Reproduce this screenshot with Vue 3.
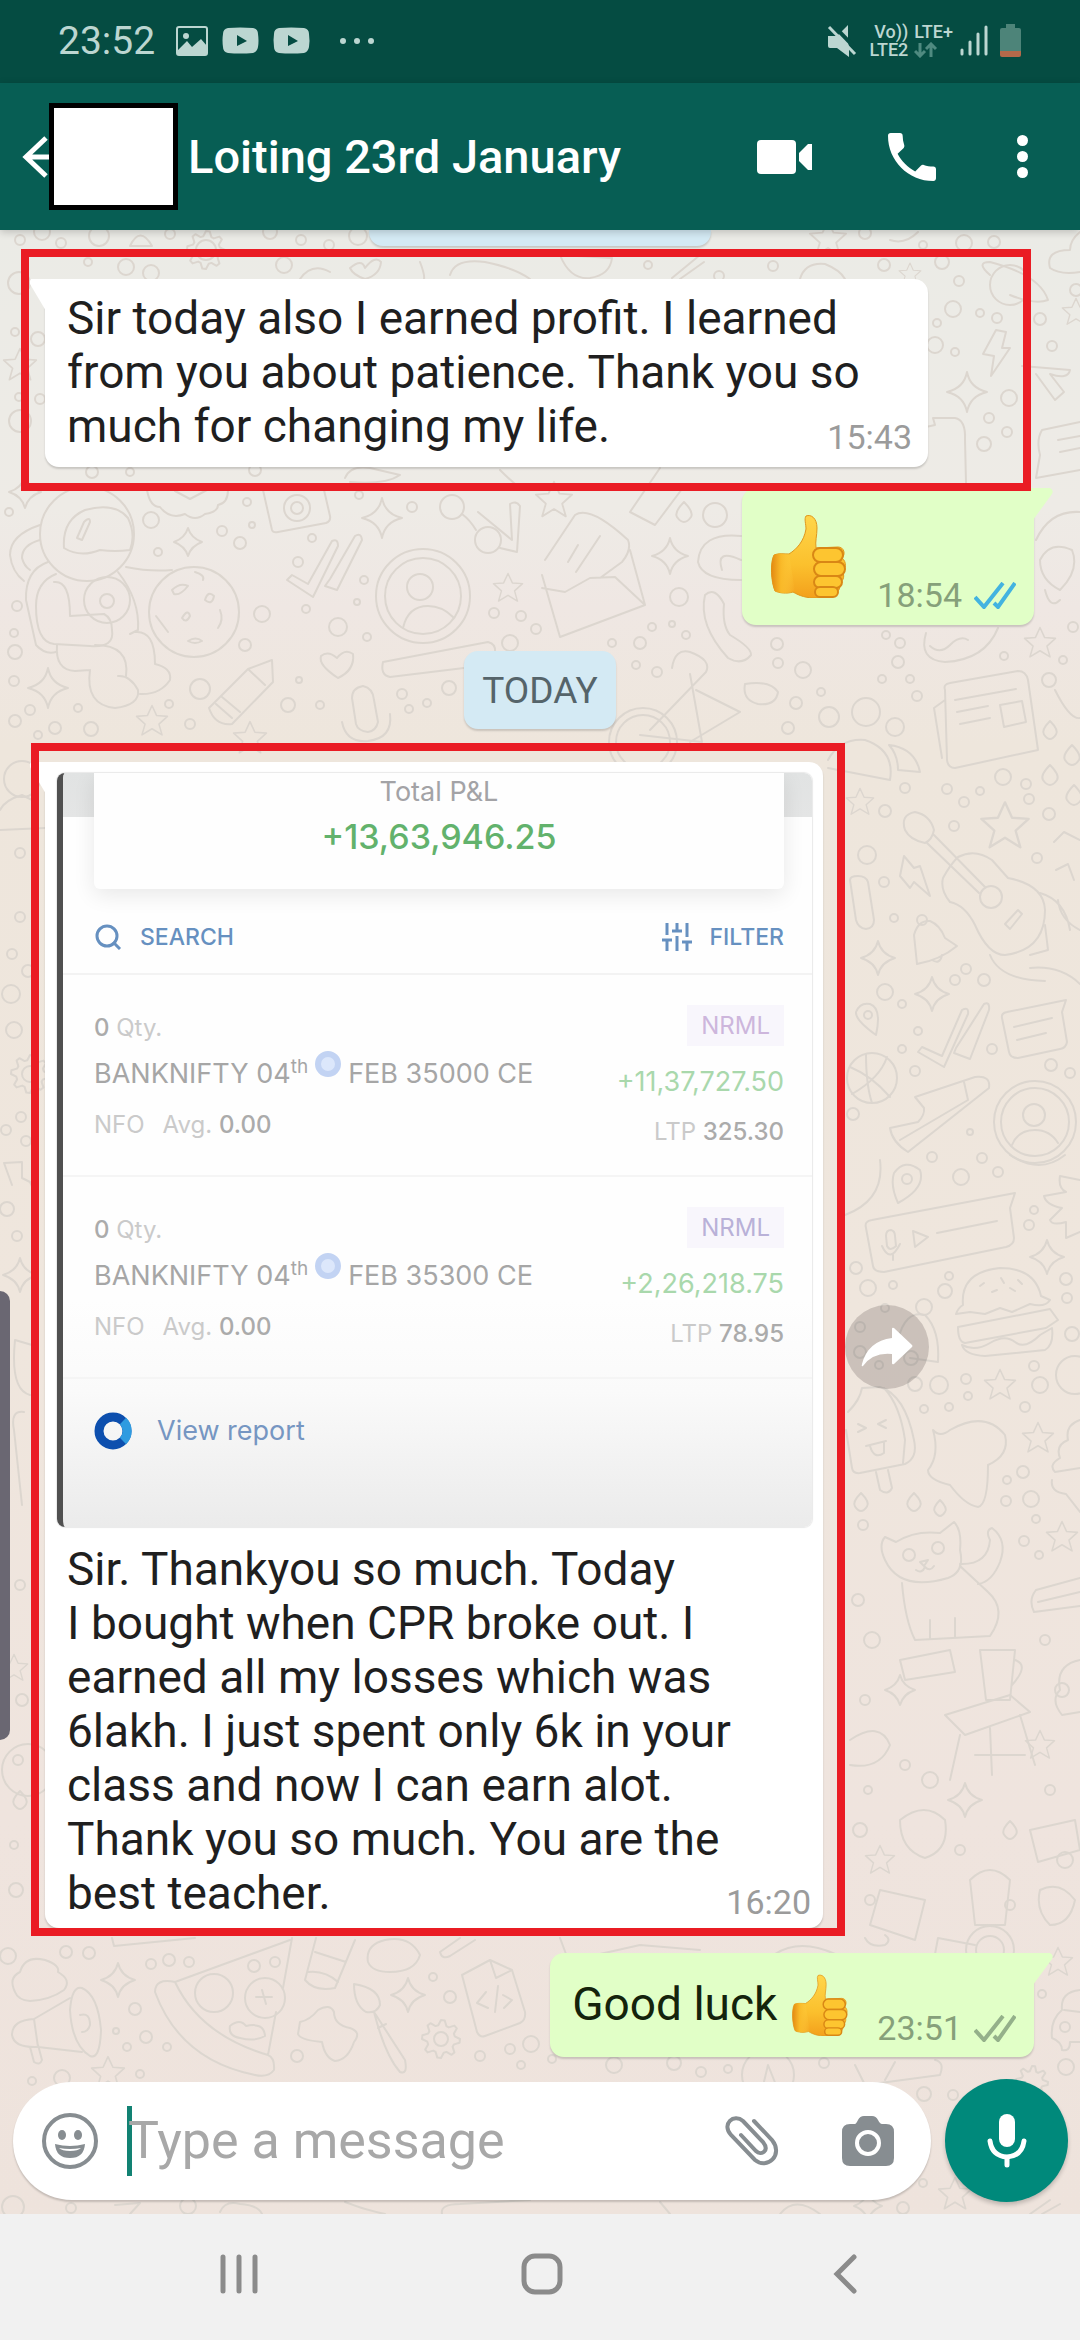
<template>
  <div class="screen">
    <svg class="defs" width="0" height="0" aria-hidden="true">
      <defs>
        <linearGradient id="skin" x1="0" y1="0" x2="0" y2="1">
          <stop offset="0" stop-color="#ffd64b" />
          <stop offset="0.6" stop-color="#fbc02d" />
          <stop offset="1" stop-color="#f3a01c" />
        </linearGradient>
        <linearGradient id="wrist" x1="0" y1="0" x2="1" y2="0">
          <stop offset="0" stop-color="#e38a12" />
          <stop offset="0.4" stop-color="#f9b928" />
          <stop offset="1" stop-color="#ffd145" stop-opacity="0" />
        </linearGradient>
        <symbol id="thumb" viewBox="0 0 76 84">
          <path d="M36 2c5-2 11 2 11 12 0 8-2 13-1 20l22-1c6 0 8 7 4 11 5 4 4 11 0 13 3 4 2 10-3 12 2 4 0 9-4 10 0 4-3 5-7 5H46c-10 0-16-2-23-6-6 2-14 1-18-1C1 68 0 48 4 41c4-2 10-1 15-1 8-5 15-13 17-25 0-5-2-10 0-13z" fill="url(#skin)" stroke="#e0971c" stroke-width="1" />
          <path d="M4 41c4-2 10-1 15-1l6 37-2 1c-6 2-14 1-18-1C1 68 0 48 4 41z" fill="url(#wrist)" />
          <g fill="#fdc530" stroke="#d98715" stroke-width="2">
            <rect x="43" y="34" width="30" height="14" rx="7" />
            <rect x="44" y="48" width="31" height="14" rx="7" />
            <rect x="44" y="62" width="28" height="12" rx="6" />
            <rect x="45" y="73" width="23" height="10" rx="5" />
          </g>
        </symbol>
        <symbol id="ticks" viewBox="0 0 42 27">
          <path d="M1 15l9 10L29 1M20 21l4 4L41 1" fill="none" stroke="currentColor" stroke-width="4" />
        </symbol>
        <symbol id="star" viewBox="-22 -22 44 44" overflow="visible">
          <path d="M0-20 6-7 20-6 9 4 13 18 0 10-13 18-9 4-20-6-6-7Z" />
        </symbol>
      </defs>
    </svg>

    <div class="status">
      <span class="clock">23:52</span>
      <svg width="32" height="30" viewBox="0 0 32 30">
        <rect x="1" y="1" width="30" height="28" rx="2" fill="none" stroke="currentColor" stroke-width="2" />
        <circle cx="10" cy="10" r="3" fill="currentColor" />
        <path d="M2 28v-4l9-9 5 6 9-8 6 7v8z" fill="currentColor" />
      </svg>
      <svg v-for="n in 2" :key="n" width="37" height="27" viewBox="0 0 37 27">
        <path fill-rule="evenodd" d="M6 1q12-1 25 0 5 1 5 6 1 7 0 13-1 5-5 6-13 1-25 0-5-1-5-6-1-7 0-13 0-5 5-6zM15 8v11l10-5z" fill="currentColor" />
      </svg>
      <svg class="more" width="36" height="8" viewBox="0 0 36 8" fill="currentColor">
        <circle cx="4" cy="4" r="3" /><circle cx="18" cy="4" r="3" /><circle cx="32" cy="4" r="3" />
      </svg>
      <div class="status-right">
        <svg width="30" height="32" viewBox="0 0 30 32" fill="currentColor">
          <path d="M1 11h9l11-11v15l1 9v8l-12-9H3q-2 0-2-2z" />
          <path d="M4 -2l28 29" stroke="#054c42" stroke-width="4" />
          <path d="M2 2l26 27" stroke="currentColor" stroke-width="3" />
        </svg>
        <div class="lte">
          <span>Vo))</span><span>LTE+</span>
          <span>LTE2</span>
          <svg width="24" height="16" viewBox="0 0 24 16" fill="none" stroke="#4f8a80" stroke-width="3">
            <path d="M6 1v12M1 9l5 5 5-5M17 15V3M12 7l5-5 5 5" />
          </svg>
        </div>
        <svg width="28" height="31" viewBox="0 0 28 31" stroke="currentColor" stroke-width="3" stroke-linecap="round">
          <path d="M2 25v4M10 17v12M18 9v20M26 2v27" />
        </svg>
        <svg width="21" height="33" viewBox="0 0 21 33">
          <path d="M6 0h9v4h4q2 0 2 2v21H0V6q0-2 2-2h4z" fill="#4d8479" />
          <path d="M0 27h21v4q0 2-2 2H2q-2 0-2-2z" fill="#b4694a" />
        </svg>
      </div>
    </div>

    <header class="bar">
      <button class="back" aria-label="Back">
        <svg width="27" height="42" viewBox="0 0 27 42" fill="none" stroke="#fff" stroke-width="5">
          <path d="M24 2L4 21l20 19M4 21h24" />
        </svg>
      </button>
      <div class="avatar"></div>
      <h1>Loiting 23rd January</h1>
      <button aria-label="Video call">
        <svg width="55" height="34" viewBox="0 0 55 34" fill="#fff">
          <rect width="39" height="34" rx="4" /><path d="M42 13l9-9h4v26h-4l-9-9z" />
        </svg>
      </button>
      <button class="call" aria-label="Voice call">
        <svg width="48" height="48" viewBox="3 3 18 18" fill="#fff">
          <path d="M6.600 10.800c1.400 2.800 3.800 5.100 6.600 6.600l2.200-2.200c.3-.3.700-.4 1-.2 1.100.4 2.300.6 3.600.6.600 0 1 .4 1 1V20c0 .6-.4 1-1 1C10.600 21 3 13.400 3 4c0-.6.400-1 1-1h3.500c.6 0 1 .4 1 1 0 1.200.2 2.400.6 3.600.1.300 0 .7-.2 1z" />
        </svg>
      </button>
      <button class="menu" aria-label="More options">
        <svg width="11" height="43" viewBox="0 0 11 43" fill="#fff">
          <circle cx="5.500" cy="5.500" r="5.500" /><circle cx="5.500" cy="21.500" r="5.500" /><circle cx="5.500" cy="37.500" r="5.500" />
        </svg>
      </button>
    </header>

    <main class="chat">
      <svg class="wallpaper" viewBox="0 230 1080 1984" preserveAspectRatio="xMidYMin slice" aria-hidden="true">
        <circle v-for="([x, y, r], i) in dots" :key="'d' + i" :cx="x" :cy="y" :r="r" />
        <use v-for="([x, y, r], i) in stars" :key="'s' + i" href="#star" :x="x - r" :y="y - r" :width="r * 2" :height="r * 2" />
        <path v-for="(s, i) in sparkles" :key="'k' + i" :d="sparkle(...s)" />
        <path v-for="(s, i) in drops" :key="'w' + i" :d="drop(...s)" />
        <path v-for="(s, i) in gears" :key="'g' + i" :d="gear(...s)" />
        <path v-for="(d, i) in doodles" :key="'p' + i" :d="d" />
      </svg>
      <div class="edge"></div>

      <div class="date-chip cut"></div>

      <section class="frame first">
        <div class="bubble in note">
          <svg class="tail" width="17" height="32" viewBox="0 0 17 32"><path d="M17 0H2Q0 2 1 5l16 27z" fill="#fff" /></svg>
          <p>Sir today also I earned profit. I learned<br>from you about patience. Thank you so<br>much for changing my life.</p>
          <time>15:43</time>
        </div>
      </section>

      <div class="bubble out big">
        <svg class="tail" width="20" height="32" viewBox="0 0 20 32"><path d="M0 0h17q4 2 2 6L0 32z" fill="#e1ffc7" /></svg>
        <svg class="emoji" width="76" height="84" role="img" aria-label="thumbs up"><use href="#thumb" /></svg>
        <div class="meta">
          <time>18:54</time>
          <svg class="read" width="42" height="27"><use href="#ticks" /></svg>
        </div>
      </div>

      <div class="date-chip">TODAY</div>

      <div class="shared">
        <section class="frame second">
          <div class="bubble in">
            <svg class="tail" width="17" height="32" viewBox="0 0 17 32"><path d="M17 0H2Q0 2 1 5l16 27z" fill="#fff" /></svg>
            <div class="photo">
              <div class="hero">
                <div class="total">
                  <span>Total P&amp;L</span>
                  <strong>+13,63,946.25</strong>
                </div>
              </div>
              <div class="tools">
                <button>
                  <svg width="27" height="26" viewBox="0 0 27 26" fill="none" stroke="currentColor" stroke-width="3">
                    <circle cx="12" cy="12" r="10" /><path d="M18 18l7 7" />
                  </svg>
                  SEARCH
                </button>
                <button class="filter">
                  <svg width="30" height="28" viewBox="0 0 30 28" fill="none" stroke="currentColor" stroke-width="3">
                    <path d="M5 0v12M0 17h10M5 17v11M15 0v8M10 8h10M15 13v15M25 0v14M20 19h10M25 19v9" />
                  </svg>
                  FILTER
                </button>
              </div>
              <div v-for="p in positions" :key="p.name" class="position">
                <div class="left">
                  <div class="qty"><b>0</b> Qty.</div>
                  <div class="name">
                    <span>BANKNIFTY 04<sup>th</sup></span>
                    <i></i>
                    <span>{{ p.name }}</span>
                  </div>
                  <div class="avg"><span>NFO</span><span>Avg. <b>0.00</b></span></div>
                </div>
                <div class="right">
                  <span class="tag" :class="p.tone">NRML</span>
                  <span class="gain">{{ p.gain }}</span>
                  <span class="ltp">LTP <b>{{ p.ltp }}</b></span>
                </div>
              </div>
              <div class="report">
                <svg width="38" height="38" viewBox="0 0 38 38" fill="none" stroke-width="9">
                  <circle cx="19" cy="19" r="14" stroke="#0d4fae" />
                  <path d="M29 9a14 14 0 0 1 0 20" stroke="#2f9be0" />
                </svg>
                <a href="#">View report</a>
              </div>
            </div>
            <p>Sir. Thankyou so much. Today<br>I bought when CPR broke out. I<br>earned all my losses which was<br>6lakh. I just spent only 6k in your<br>class and now I can earn alot.<br>Thank you so much. You are the<br>best teacher.</p>
            <time>16:20</time>
          </div>
        </section>
        <button class="forward" aria-label="Forward">
          <svg width="52" height="40" viewBox="0 0 52 40" fill="#fff">
            <path d="M33 1l18 17q1 1 0 2L33 37q-2 1-2-1v-9Q12 25 2 39q-2 1-1-2Q7 14 31 11V2q0-2 2-1z" />
          </svg>
        </button>
      </div>

      <div class="bubble out last">
        <svg class="tail" width="20" height="32" viewBox="0 0 20 32"><path d="M0 0h17q4 2 2 6L0 32z" fill="#e1ffc7" /></svg>
        <p>Good luck</p>
        <svg class="emoji" width="57" height="62" role="img" aria-label="thumbs up"><use href="#thumb" /></svg>
        <div class="meta">
          <time>23:51</time>
          <svg width="42" height="27"><use href="#ticks" /></svg>
        </div>
      </div>

      <form class="composer" @submit.prevent>
        <div class="field">
          <button type="button" aria-label="Emoji">
            <svg width="56" height="56" viewBox="0 0 56 56" fill="#878d91">
              <circle cx="28" cy="28" r="26" fill="none" stroke="#878d91" stroke-width="4" />
              <ellipse cx="20" cy="22" rx="4" ry="5" /><ellipse cx="36" cy="22" rx="4" ry="5" />
              <path fill-rule="evenodd" d="M13 31q15 4 30 0-1 14-15 14T13 31zM17 35q3 3 11 3t11-3q-11 2-22 0z" />
            </svg>
          </button>
          <span class="caret"></span>
          <input v-model="message" type="text" aria-label="Message" placeholder="Type a message">
          <button type="button" aria-label="Attach">
            <svg width="54" height="50" viewBox="0 0 54 50" fill="none" stroke="#878d91" stroke-width="4" stroke-linecap="round">
              <path d="M29 5l18 19c12 15-5 30-17 20L6 19C-4 8 9-3 18 5l20 21c7 9-2 14-7 9L16 19" />
            </svg>
          </button>
          <button class="camera" type="button" aria-label="Camera">
            <svg width="52" height="50" viewBox="0 0 52 50">
              <path d="M8 8h5q1 0 3-4t6-4h8q4 0 6 4t4 4h4q8 0 8 8v26q0 8-8 8H8q-8 0-8-8V16q0-8 8-8z" fill="#878d91" />
              <circle cx="26" cy="27" r="11" fill="none" stroke="#fff" stroke-width="4" />
            </svg>
          </button>
        </div>
        <button class="mic" type="button" aria-label="Voice message">
          <svg width="40" height="54" viewBox="0 0 40 54" fill="none" stroke="#fff" stroke-width="5" stroke-linecap="round">
            <rect x="12" y="0" width="16" height="33" rx="8" fill="#fff" stroke="none" />
            <path d="M3 27q2 15 17 16 15-1 17-16M20 44v7" />
          </svg>
        </button>
      </form>
    </main>

    <nav class="keys">
      <button aria-label="Recents">
        <svg width="38" height="40" viewBox="0 0 38 40"><path d="M3 3v34M19 3v34M35 3v34" /></svg>
      </button>
      <button aria-label="Home">
        <svg width="42" height="42" viewBox="0 0 42 42"><rect x="3" y="3" width="36" height="36" rx="11" /></svg>
      </button>
      <button aria-label="Back">
        <svg width="24" height="40" viewBox="0 0 24 40"><path d="M21 3L4 20l17 17" /></svg>
      </button>
    </nav>
  </div>
</template>

<script setup>
import { ref } from "vue";

const message = ref("");

const positions = [
  { name: "FEB 35000 CE", gain: "+11,37,727.50", ltp: "325.30", tone: "pink" },
  { name: "FEB 35300 CE", gain: "+2,26,218.75", ltp: "78.95", tone: "violet" }
];

// chat wallpaper: [x, y, radius]
const dots = [
  [20, 240, 5], [42, 232, 8], [61, 243, 5], [99, 236, 10], [170, 234, 5], [270, 232, 7], [301, 240, 5], [358, 236, 9],
  [329, 245, 5], [88, 262, 4], [284, 265, 8], [648, 265, 4], [773, 266, 5], [719, 276, 5], [884, 265, 6], [942, 262, 7],
  [959, 281, 5], [953, 309, 8], [980, 313, 4], [997, 318, 5], [937, 323, 4], [935, 345, 8], [955, 352, 4], [1040, 319, 6],
  [1052, 346, 5], [1009, 398, 8], [989, 418, 5], [1007, 432, 5], [984, 444, 7], [1076, 290, 6], [964, 243, 8], [994, 242, 6],
  [923, 245, 4], [865, 233, 6], [15, 332, 4], [38, 339, 7], [19, 283, 11], [19, 397, 4], [40, 399, 5], [20, 421, 11],
  [92, 472, 6], [130, 472, 4], [255, 470, 6], [9, 512, 4], [151, 520, 8], [247, 502, 4], [252, 525, 3], [222, 531, 5],
  [240, 543, 6], [158, 552, 4], [312, 538, 4], [359, 495, 4], [412, 507, 5], [298, 562, 5], [364, 580, 4], [357, 602, 3],
  [306, 609, 4], [262, 614, 8], [338, 627, 9], [367, 637, 4], [17, 606, 5], [14, 633, 4], [15, 652, 7], [245, 645, 6],
  [14, 681, 5], [200, 689, 10], [299, 680, 3], [169, 704, 4], [288, 705, 7], [320, 705, 4], [402, 694, 5], [409, 709, 4],
  [427, 703, 4], [449, 688, 7], [78, 708, 4], [30, 710, 5], [15, 721, 6], [55, 728, 6], [91, 729, 7], [38, 735, 4],
  [190, 724, 5], [494, 613, 5], [521, 616, 5], [536, 629, 5], [510, 643, 8], [715, 515, 12], [679, 597, 9], [652, 627, 4],
  [672, 624, 3], [686, 635, 4], [612, 643, 4], [640, 643, 6], [777, 644, 6], [886, 635, 4], [900, 643, 5], [778, 663, 5],
  [803, 670, 8], [898, 662, 6], [636, 665, 4], [657, 672, 5], [821, 692, 4], [796, 703, 6], [882, 679, 4], [910, 679, 4],
  [917, 696, 5], [788, 728, 6], [829, 717, 10], [866, 712, 14], [895, 727, 9], [1004, 656, 4], [1049, 680, 7], [1073, 627, 5],
  [1063, 660, 4], [905, 788, 5], [947, 789, 5], [980, 791, 4], [964, 802, 5], [1003, 777, 8], [1026, 784, 5], [1029, 799, 5],
  [1049, 814, 6], [885, 811, 6], [954, 826, 5], [867, 855, 9], [884, 882, 5], [1037, 858, 5], [894, 918, 4], [966, 969, 5],
  [955, 980, 5], [984, 980, 6], [885, 992, 8], [902, 1004, 4], [918, 1031, 4], [902, 1049, 4], [915, 1071, 5], [992, 1049, 5],
  [1051, 1065, 6], [1070, 1073, 5], [970, 1132, 3], [853, 1114, 6], [20, 853, 5], [20, 917, 5], [12, 954, 5], [28, 971, 6],
  [11, 994, 9], [14, 1030, 8], [21, 1117, 5], [6, 1130, 5], [26, 1141, 5], [7, 1209, 7], [17, 1236, 5], [932, 1157, 5],
  [982, 1158, 5], [961, 1177, 8], [998, 1172, 5], [1034, 1210, 4], [1029, 1225, 5], [856, 1268, 6], [868, 1288, 8],
  [893, 1285, 4], [949, 1276, 4], [945, 1291, 7], [1066, 1279, 6], [1067, 1298, 5], [1072, 1334, 7], [860, 1327, 5],
  [860, 1352, 6], [885, 1308, 4], [879, 1365, 4], [911, 1358, 7], [924, 1307, 8], [915, 1384, 7], [939, 1385, 9], [966, 1379, 5],
  [968, 1396, 4], [924, 1409, 4], [949, 1407, 4], [1034, 1366, 5], [1040, 1385, 8], [1025, 1407, 5], [1023, 1472, 6],
  [1007, 1480, 4], [1006, 1501, 5], [1031, 1499, 8], [1036, 1519, 4], [863, 1525, 5], [1024, 1541, 5], [1039, 1555, 4],
  [858, 1600, 6], [872, 1640, 8], [1045, 1640, 5], [865, 1700, 5], [1062, 1690, 7], [905, 1765, 5], [930, 1780, 8],
  [1050, 1790, 5], [868, 1790, 4], [860, 1830, 7], [960, 1850, 5], [1065, 1860, 8], [870, 1900, 5], [1010, 1905, 5],
  [18, 1760, 5], [14, 1845, 4], [20, 1585, 5], [22, 1700, 6], [16, 1890, 7], [8, 1956, 8], [66, 1952, 6], [89, 1953, 6],
  [151, 1964, 5], [169, 1960, 6], [189, 1962, 5], [254, 1966, 6], [275, 1962, 5], [135, 2009, 6], [116, 2031, 3],
  [146, 2037, 6], [127, 2047, 4], [167, 2047, 4], [32, 2081, 4], [62, 2078, 8], [140, 2074, 4], [297, 2056, 6], [433, 1977, 4],
  [450, 1997, 6], [480, 2056, 5], [510, 2049, 5], [531, 2044, 8], [521, 2065, 4], [13, 2207, 11], [71, 2208, 5], [188, 2206, 8],
  [552, 2059, 4], [614, 2065, 8], [674, 2063, 7], [701, 2072, 5], [728, 2069, 4], [824, 2063, 5], [924, 2094, 7], [953, 2095, 5],
  [923, 2183, 4], [1066, 2067, 8], [1042, 1994, 4], [903, 2208, 6], [423, 596, 47], [423, 596, 38], [420, 587, 13],
  [87, 534, 47], [107, 600, 23], [107, 601, 7], [194, 612, 45], [297, 508, 13], [297, 508, 6], [452, 507, 12], [488, 540, 13],
  [643, 742, 34], [643, 742, 27], [991, 897, 11], [922, 920, 5], [868, 1015, 4], [872, 1078, 25], [1035, 1122, 41],
  [1035, 1122, 34], [1034, 1115, 11], [907, 1179, 5], [909, 1555, 6], [938, 1548, 6], [441, 2039, 7], [214, 1993, 19],
  [265, 1998, 20], [1065, 2027, 5], [22, 779, 18], [1010, 285, 20], [28, 1770, 26], [768, 2075, 26], [990, 1950, 24],
  [990, 1950, 14], [30, 1074, 8], [1075, 1375, 19], [126, 267, 8], [151, 273, 8], [206, 250, 10]
];

const stars = [
  [508, 588, 16], [152, 721, 17], [250, 738, 18], [20, 365, 18], [1040, 643, 17], [1005, 826, 26], [1000, 1385, 17],
  [1038, 1438, 17], [1062, 1537, 17], [1058, 1962, 16], [108, 2073, 18], [955, 2194, 18], [860, 802, 15], [554, 500, 20],
  [828, 239, 20], [1076, 312, 15], [14, 1668, 15], [1040, 1745, 16], [880, 1860, 16], [910, 274, 12]
];

const sparkles = [
  [382, 518, 20], [188, 542, 14], [48, 688, 20], [670, 556, 18], [967, 392, 20], [878, 958, 17], [932, 994, 17],
  [1047, 1257, 17], [118, 1980, 17], [408, 1995, 17], [20, 1275, 17], [868, 2206, 14], [25, 492, 16], [965, 1800, 17], [900, 1690, 15]
];

const drops = [
  [684, 512, 10], [1050, 730, 9], [1050, 775, 10], [1072, 755, 10], [1074, 795, 10], [861, 1502, 9], [914, 1502, 9],
  [940, 1508, 8], [20, 1800, 9], [1010, 1830, 9]
];

const gears = [
  [441, 2039, 19], [30, 1074, 19], [1032, 2082, 16], [206, 250, 19]
];

const sparkle = (x, y, s) =>
  `M${x} ${y - s}q3 ${s - 4} ${s} ${s}q${3 - s} 4 ${-s} ${s}q-3 ${4 - s} ${-s} ${-s}q${s - 3} -4 ${s} ${-s}z`;

const drop = (x, y, s) =>
  `M${x} ${y - s}q${s} ${s} ${s - 3} ${s * 1.5}q${3 - s} ${s} ${6 - 2 * s} 0q-3 ${-s / 2} ${s - 3} ${-s * 1.5}z`;

const gear = (x, y, r) => {
  const pts = [];
  for (let i = 0; i < 32; i++) {
    const a = (i / 32) * Math.PI * 2;
    const k = i % 4 < 2 ? r : r - 5;
    pts.push(`${(x + Math.cos(a) * k).toFixed(1)} ${(y + Math.sin(a) * k).toFixed(1)}`);
  }
  return "M" + pts.join("L") + "Z";
};

const doodles = [
  // row under the header
  "M130 246Q140 225 152 246ZM350 268Q362 258 365 268Q375 255 381 262Q380 275 365 279Q353 275 350 268Z",
  "M450 275Q455 258 485 262Q515 268 530 279M560 255Q570 280 590 278Q610 275 612 258ZM672 278L700 255M680 279L704 262",
  "M800 279Q805 262 825 264Q840 270 845 279M890 240Q905 245 918 232M990 275Q975 262 990 262Q1040 275 1048 300Q1035 305 1010 295",
  "M1080 232Q1070 240 1070 250Q1045 250 1050 268Q1060 275 1080 272M420 262Q425 275 424 279M300 279Q312 262 330 272",
  "M996 330L1006 332 1002 348 1010 348 991 376 994 356 983 354ZM1022 366L1070 370Q1068 380 1050 374L1064 392 1055 400 1036 374",
  "M915 450L912 430 935 425 933 418H955Q966 420 965 440L966 483",
  "M1080 422L1042 430Q1036 440 1040 455L1036 478 1080 470M1058 440L1080 436M1060 452L1080 448",
  "M345 478Q350 465 370 468L400 475Q385 485 350 482M500 470Q510 480 522 490M660 468L630 512 655 525 685 485",
  // astronaut
  "M64 548Q62 520 85 510Q115 502 128 518Q136 535 130 550Q115 552 100 550Q80 558 64 548ZM77 538L84 522Q90 516 90 522L82 540Z",
  "M48 562Q25 570 26 600L36 645Q45 655 56 652M40 525Q10 535 10 555Q12 572 24 581M40 540Q22 545 22 558Q24 566 30 570",
  "M56 574Q36 582 36 606Q36 642 54 644L90 646Q115 648 112 630Q112 618 104 614L70 616Q70 580 54 582",
  "M57 645Q55 670 75 671L90 670M90 670Q85 705 115 708Q140 705 138 690Q130 675 118 676M126 676Q130 645 95 645M135 632Q155 630 155 664Q172 668 170 680Q160 695 140 694",
  "M118 572Q140 600 138 630L130 634M126 567Q150 572 172 570",
  // moon craters
  "M172 590Q180 582 188 586Q180 596 174 594ZM205 600Q208 590 214 596Q212 606 205 600ZM182 618Q188 608 190 616Q186 624 182 618ZM156 616L168 632M188 641Q196 636 202 641Q195 645 188 641ZM220 610Q224 620 218 628M195 572Q205 575 203 580",
  "M147 490Q150 507 160 507Q170 520 185 514Q195 522 205 514Q218 512 218 505Q228 503 228 490M175 491L190 499 207 490",
  "M263 490L272 530Q273 533 278 532L326 523Q331 521 330 516L324 490",
  "M292 575L308 584 332 541Q338 538 338 546L313 597 287 580ZM330 579L355 536Q361 532 362 540L337 590 325 586Z",
  "M403 628Q408 606 428 606Q442 606 453 617",
  "M338 678Q318 665 321 656Q328 650 337 658Q345 648 353 654Q355 670 338 678Z",
  "M248 669L272 660 273 682 232 724Q215 726 209 708ZM248 669L265 685M222 697L240 712M216 704L232 718",
  "M352 698Q352 688 363 686Q373 688 374 700L378 722Q376 731 368 732Q358 731 356 724ZM342 722Q346 743 368 741Q393 738 390 714",
  "M383 662Q380 675 390 677L464 668M383 662L488 642Q496 644 495 652",
  "M462 514Q470 520 476 530M500 548L517 552 520 506Q516 500 510 504L512 540 478 512",
  // letter, phone, bike
  "M542 575L560 637 645 605 630 550M542 588L565 592 590 578 615 577 645 605M545 560L575 515Q590 505 628 540Q632 550 622 562L600 578M568 562L578 545M576 572L600 536",
  "M705 595Q698 625 728 658Q742 666 751 655Q752 648 730 635Q722 625 724 604Q715 586 705 595Z",
  "M741 536Q700 532 698 562Q702 580 741 580M741 560Q715 548 722 570",
  "M672 668Q675 648 690 652Q712 660 706 672L650 730M690 674L702 742 640 735M696 690L740 712 690 742M745 684Q770 680 778 692Q776 706 758 704Q742 700 745 684Z",
  "M926 633Q918 660 945 662Q985 660 998 628M930 646Q940 655 950 645T968 640",
  "M945 690Q943 684 950 683L1018 671Q1026 671 1028 680L1038 750 955 768Q948 768 947 760ZM955 700L1016 689M957 712L988 706M960 724L990 718M1000 705L1022 701 1026 722 1004 727ZM945 700L934 708 942 758",
  "M1055 690Q1070 720 1080 718M1036 540Q1050 510 1080 512M1040 560Q1050 540 1072 550Q1080 570 1060 590Q1040 580 1040 560ZM1045 590Q1050 610 1060 600",
  "M828 760Q840 738 865 740Q895 750 890 780L828 768M889 745Q915 748 920 772L898 770Q898 755 889 745Z",
  "M0 830L45 828M0 810Q5 800 22 795L32 800",
  // guitar
  "M905 830Q900 815 915 812Q930 815 934 830Q932 840 925 843Q910 840 905 830ZM927 843L979 893M934 835L985 887",
  "M958 857Q975 848 992 860L1008 878Q1044 885 1045 910Q1045 950 1005 955Q988 955 975 925Q965 905 950 902Q940 890 943 878Q950 865 958 857ZM1005 924L1018 910 1022 914 1010 929Z",
  "M1040 893Q1065 900 1070 930M990 955Q1000 980 1045 981M1045 925L1048 950 1030 955M1030 968Q1060 965 1080 984M1058 900Q1060 920 1080 930",
  "M917 964L914 935Q918 920 930 921Q940 925 945 938L957 946Q940 960 917 964ZM932 960Q940 965 942 955",
  "M904 856L914 868 920 866 930 896 914 882 910 888 900 876ZM1054 842L1064 832 1080 840M1056 870L1068 864 1074 880",
  "M850 880Q850 876 858 876Q866 876 868 882L874 920Q874 928 866 929Q858 928 856 920Z",
  "M876 1035Q855 1020 856 1012Q860 1002 870 1004Q882 1008 876 1035Z",
  "M922 1047L942 1056 962 1010Q969 1006 968 1014L944 1067 918 1052ZM956 1048L984 1004Q990 1001 989 1010L970 1059 954 1053Z",
  "M1002 1018Q1001 1013 1007 1012L1066 1000 1062 1012 1067 1042Q1066 1048 1060 1049L1018 1058Q1010 1058 1009 1052ZM1014 1027L1052 1018M1017 1040L1046 1033",
  "M850 1067Q872 1076 890 1097M866 1054Q866 1085 872 1103M887 1057Q880 1078 852 1094",
  "M915 1097L975 1077Q991 1075 989 1088L908 1152Q892 1142 890 1128L918 1122Q925 1115 924 1108ZM900 1140L968 1100 964 1082",
  "M1012 1145Q1018 1130 1035 1130Q1050 1130 1058 1143",
  // location, voice note, burger
  "M898 1203Q890 1185 894 1173Q905 1158 920 1170Q926 1188 898 1203ZM845 1215Q885 1200 880 1160M1010 1155Q1040 1175 1065 1155",
  "M866 1228Q864 1221 872 1220L1015 1193 1010 1208 1014 1238Q1014 1245 1006 1247L884 1272Q874 1272 873 1266ZM937 1233L997 1221M913 1231L928 1237 915 1247Z",
  "M886 1236Q886 1230 891 1230Q895 1231 895 1236L896 1246Q890 1252 887 1246ZM882 1246Q890 1264 900 1244M893 1255V1260",
  "M1080 1180L1060 1176Q1058 1188 1066 1192L1044 1196Q1046 1205 1062 1208L1050 1220Q1052 1226 1066 1222V1238L1080 1232",
  "M963 1305Q960 1272 1000 1268Q1035 1268 1041 1296L1050 1300Q1045 1308 1030 1304L1012 1312 1000 1308 985 1314 970 1312 956 1314Q958 1308 963 1305Z",
  "M958 1327L1050 1309 1058 1320 1046 1328 965 1343Q958 1342 958 1327ZM962 1345Q975 1352 990 1343T1015 1342T1040 1335L1052 1328Q1054 1345 1045 1350L985 1356Q965 1355 962 1345",
  "M1001 1278L1004 1283M1018 1280L1022 1284M980 1286L984 1283M992 1292L997 1290M1010 1288L1015 1291",
  "M898 1340Q905 1310 925 1315Q940 1330 938 1362L910 1358",
  // ice cream bar, cat
  "M846 1430L852 1468Q853 1474 860 1473L905 1464Q918 1458 914 1440Q905 1395 880 1387L862 1388Q860 1400 848 1412M903 1463L905 1440Q900 1405 884 1388M876 1472L880 1490Q888 1496 892 1488L888 1470",
  "M858 1424L866 1428 858 1432M886 1420L878 1424 886 1428M866 1446L886 1441M870 1446Q874 1460 884 1453V1442",
  "M933 1430Q940 1438 950 1430Q985 1410 1005 1435Q1010 1455 988 1465Q988 1505 978 1507Q965 1505 950 1485Q928 1480 928 1470Q940 1455 933 1430Z",
  "M1080 1420Q1065 1425 1068 1440Q1055 1445 1060 1458Q1048 1465 1055 1472L1080 1468M1052 1480Q1050 1492 1066 1494L1080 1512",
  "M885 1560Q878 1545 885 1537L896 1542Q915 1530 940 1533L954 1522Q962 1530 960 1550Q965 1572 948 1578Q900 1592 885 1560ZM920 1562L928 1560 924 1566ZM916 1570Q922 1574 925 1567Q930 1572 934 1566",
  "M902 1583Q905 1620 915 1640L990 1636Q1008 1610 988 1592L960 1566M960 1564Q988 1565 990 1540Q985 1530 992 1528Q1008 1540 1000 1562Q992 1582 978 1584M930 1638V1620M955 1638V1618",
  "M1036 1590L1080 1578M1038 1602L1080 1592M1034 1612L1080 1606M1036 1590Q1028 1600 1034 1612",
  "M980 1650H1015L1010 1700H986ZM1015 1660Q1030 1665 1012 1685M900 1660L950 1650 955 1672 905 1680Z",
  "M945 1715L1010 1695 1030 1712 965 1735ZM960 1735L950 1780M1020 1715L1035 1765M990 1728L992 1775M975 1755H1025",
  "M1080 1660Q1055 1665 1060 1690Q1050 1700 1062 1715L1080 1712M850 1740Q880 1720 890 1745Q880 1770 850 1765",
  "M900 1820Q925 1800 945 1820Q950 1850 925 1858Q900 1850 900 1820ZM1030 1830L1075 1820 1080 1850 1038 1862ZM970 1880Q990 1860 1010 1880L1005 1925H975Z",
  "M880 1890L925 1900 915 1940 870 1925ZM1040 1890Q1060 1880 1075 1900Q1070 1925 1050 1925Q1035 1910 1040 1890Z",
  "M4 1163L22 1162 22 1178 30 1182 36 1195M12 1185L4 1163M15 1340L32 1345M15 1340Q10 1390 30 1395M14 1430Q10 1410 24 1412M14 1430L22 1505",
  // bottom row
  "M15 1992Q8 1978 20 1972Q25 1955 45 1960Q60 1965 58 1972Q72 1980 64 1990Q50 2000 30 2001Q18 2000 15 1992Z",
  "M34 2019L70 1998M38 2047L82 2052M34 2019Q12 2020 12 2035Q14 2048 38 2047ZM30 2047L34 2062Q40 2066 42 2060L38 2045M70 2010Q72 1985 82 1988Q98 1995 101 2030Q100 2060 90 2056Q72 2045 70 2010ZM80 2015Q90 2012 90 2025Q88 2032 82 2032",
  "M155 1992Q155 1978 175 1982Q200 2035 268 2055Q275 2058 274 2070Q268 2078 255 2075Q180 2060 155 1992ZM175 1982L290 1940M268 2055L276 2012M283 1988L292 1938M256 1997H272M262 1990L266 2004M230 2026Q240 2018 246 2026Q264 2022 265 2036Q255 2042 240 2038Q228 2036 230 2026Z",
  "M112 1938L114 1946 195 1938M316 1938L305 1980Q315 1992 335 1988L355 1940M315 1952L346 1962M308 1972Q325 1970 338 1982M368 1962Q365 1945 385 1940Q410 1935 420 1955Q415 1972 390 1972Q372 1972 368 1962ZM460 1938L440 1952Q442 1960 450 1956L475 1940",
  "M300 2022Q310 2020 318 2010Q330 2003 334 2012Q334 2025 350 2028Q362 2032 354 2042Q348 2060 335 2061Q325 2058 322 2042Q300 2040 298 2034Z",
  "M354 1984Q380 1988 380 2005Q376 2014 366 2012Q354 2005 354 1984ZM374 2012L405 2060Q408 2075 400 2072Q385 2055 374 2012ZM378 2028L386 2024",
  "M462 1975L490 1960 512 1970 525 2012Q526 2020 520 2023L485 2036Q480 2038 477 2032ZM490 1960L496 1978 512 1970M486 1992L477 2003 488 2008M498 1986L495 2012M503 1995L512 2000 504 2008",
  "M600 1954L640 1945 700 1950M560 1938L566 1954M775 1954Q800 1938 835 1954M935 1954L938 1938 975 1945M865 1938Q870 1948 885 1945Q892 1940 885 1935",
  "M1080 1990Q1060 1992 1062 2010Q1050 2020 1052 2038Q1062 2042 1062 2050Q1070 2052 1070 2042H1080M1064 2010L1080 2012",
  "M855 2065L865 2085 940 2075Q945 2062 935 2060M895 2062L885 2080M762 2090L768 2065 778 2090",
  "M115 2205L140 2203 130 2214M220 2212Q225 2200 240 2204Q258 2205 262 2214M345 2202Q365 2210 385 2214M442 2214Q440 2204 460 2204L530 2200M660 2202L670 2214M780 2214Q795 2195 820 2214M1030 2214L1050 2200M1042 2214L1060 2204"
];
</script>

<style>
body {
  margin: 0;
}
</style>

<style scoped>
* {
  box-sizing: border-box;
}

.screen {
  display: flex;
  flex-direction: column;
  min-height: 100vh;
  font-family: Roboto, "Noto Sans", sans-serif;
  color: #1f1f1f;
}

.defs {
  position: absolute;
}

button {
  display: flex;
  flex: none;
  align-items: center;
  justify-content: center;
  padding: 0;
  border: none;
  background: none;
  font: inherit;
  color: inherit;
  cursor: pointer;
}

svg {
  display: block;
  flex: none;
}

p {
  margin: 0;
  font-size: 46px;
  line-height: 54px;
  white-space: nowrap;
}

/* status bar */
.status {
  display: flex;
  align-items: center;
  gap: 14px;
  height: 83px;
  padding: 0 59px 2px 58px;
  background: #054c42;
  color: #bcd6d1;
}

.clock {
  margin-right: 7px;
  font-size: 39px;
  line-height: 46px;
}

.more {
  margin-left: 15px;
}

.status-right {
  display: flex;
  align-items: center;
  gap: 12px;
  margin-left: auto;
}

.lte {
  display: grid;
  grid-template-columns: auto auto;
  gap: 0 6px;
  justify-items: end;
  align-items: center;
  margin-right: -5px;
  font-size: 18px;
  font-weight: 500;
  line-height: 18px;
}

.lte svg {
  justify-self: start;
}

/* header */
.bar {
  position: relative;
  z-index: 3;
  display: flex;
  align-items: center;
  height: 147px;
  padding: 0 52px 0 22px;
  background: #075e54;
  box-shadow: 0 2px 8px rgba(0, 0, 0, 0.2);
}

.avatar {
  width: 129px;
  height: 107px;
  border: 5px solid #000;
  background: #fff;
}

h1 {
  flex: 1;
  margin: 0 0 0 10px;
  font-size: 47px;
  font-weight: 500;
  line-height: 56px;
  color: #fff;
}

.call {
  margin: 0 81px 0 76px;
}

/* chat */
.chat {
  position: relative;
  z-index: 0;
  display: flex;
  flex: 1;
  flex-direction: column;
  background: linear-gradient(#ebebe6 0%, #eeebe6 14%, #efe7e3 19%, #eee6dc 26%, #efe6dd 55%, #efe4de 80%, #eee3dc 100%);
}

.wallpaper {
  position: absolute;
  inset: 0;
  z-index: -1;
  width: 100%;
  height: 100%;
  fill: none;
  stroke: #dcd6cf;
  stroke-width: 2;
  stroke-linejoin: round;
  stroke-linecap: round;
}

.edge {
  position: absolute;
  top: 1061px;
  left: 0;
  width: 10px;
  height: 449px;
  border-radius: 0 10px 10px 0;
  background: #6a6772;
}

.date-chip {
  align-self: center;
  margin-top: 26px;
  padding: 18px 18px 16px;
  border-radius: 14px;
  background: #d4eaf4;
  box-shadow: 0 2px 2px rgba(0, 0, 0, 0.15);
  font-size: 37px;
  line-height: 44px;
  color: #55646a;
}

.date-chip.cut {
  width: 342px;
  height: 16px;
  margin: 0;
  padding: 0;
  border-radius: 0 0 14px 14px;
}

/* red outline drawn above the bubble it surrounds */
.frame {
  position: relative;
  z-index: 1;
  border: 8px solid transparent;
}

.frame::after {
  content: "";
  position: absolute;
  inset: -8px;
  border: 8px solid #ea1c24;
  pointer-events: none;
}

.first {
  margin: 3px 49px 0 21px;
  padding: 22px 16px 16px;
}

.second {
  padding: 11px 14px 0 6px;
}

.bubble {
  position: relative;
  border-radius: 14px;
  box-shadow: 0 2px 2px rgba(0, 0, 0, 0.16);
}

.in {
  border-top-left-radius: 0;
  background: #fff;
}

.in .tail {
  position: absolute;
  top: 0;
  left: -16px;
}

.in p {
  padding: 12px 22px 14px;
}

.note {
  max-width: 883px;
}

.in > time {
  position: absolute;
  right: 16px;
  bottom: 10px;
}

time {
  font-size: 34px;
  line-height: 40px;
  color: #9b9b9b;
}

.out {
  display: flex;
  align-items: flex-end;
  align-self: flex-end;
  margin-right: 46px;
  border-top-right-radius: 0;
  background: #e1ffc7;
}

.out .tail {
  position: absolute;
  top: 0;
  right: -19px;
}

.meta {
  display: flex;
  align-items: center;
  gap: 12px;
  color: #94b08a;
}

.meta time {
  color: #86a07a;
}

.read {
  color: #43b3e0;
}

.big {
  margin-top: -3px;
  padding: 26px 18px 10px 28px;
}

.big .emoji {
  margin: 0 31px 17px 0;
}

.last {
  margin-top: 17px;
  padding: 21px 18px 9px 22px;
}

.last p {
  margin-bottom: 17px;
  color: #14230c;
}

.last .emoji {
  margin: 0 29px 12px 14px;
}

.shared {
  display: flex;
  align-items: center;
  margin: 14px 0 0 31px;
}

.second {
  flex: 0 1 814px;
}

.second .bubble {
  padding-top: 11px;
}

.second p {
  padding-top: 13px;
  padding-bottom: 8px;
}

.second time {
  right: 12px;
  bottom: 6px;
}

.forward {
  width: 84px;
  height: 84px;
  margin-top: 14px;
  border-radius: 50%;
  background: rgba(40, 30, 25, 0.18);
}

/* shared photo */
.photo {
  margin: 0 11px 2px 12px;
  overflow: hidden;
  border-left: 6px solid #505050;
  border-radius: 8px;
  background: linear-gradient(#fefefe 70%, #fafafa 82%, #ebebeb 100%);
  box-shadow: 0 0 1px 1px #e9e9e9;
  font-family: Inter, Roboto, sans-serif;
}

.hero {
  padding: 0 28px 0 31px;
  background: linear-gradient(#e1e3e3, #e4e5e5) no-repeat 0 0 / 100% 44px;
}

.total {
  display: flex;
  flex-direction: column;
  align-items: center;
  gap: 9px;
  padding: 3px 0 32px;
  border-radius: 0 0 6px 6px;
  background: #fefefe;
  box-shadow: 0 6px 22px rgba(0, 0, 0, 0.09);
  font-size: 27px;
  line-height: 32px;
  color: #a3a3a6;
}

.total strong {
  font-size: 34px;
  font-weight: 500;
  line-height: 40px;
  color: #62b26c;
}

.tools {
  display: flex;
  justify-content: space-between;
  padding: 33px 28px 21px 32px;
  border-bottom: 2px solid #f3f3f3;
  color: #6690c0;
  font-size: 23px;
  font-weight: 500;
  line-height: 30px;
}

.tools button {
  gap: 18px;
}

.position {
  display: flex;
  justify-content: space-between;
  padding: 30px 28px 28px 31px;
  border-bottom: 2px solid #f5f5f5;
  color: #cacaca;
  font-size: 24px;
  line-height: 30px;
}

.position b {
  font-weight: 500;
  color: #ababab;
}

.left {
  padding-top: 8px;
}

.name {
  display: flex;
  margin: 14px 0 19px;
  font-size: 27px;
  line-height: 34px;
  color: #a6a6a6;
}

sup {
  font-size: 19px;
  line-height: 1px;
}

.name i {
  width: 26px;
  height: 26px;
  margin: -6px 7px 0;
  border: 6px solid #c2d3f3;
  border-radius: 50%;
  background: #dce7fb;
}

.avg {
  display: flex;
  gap: 18px;
}

.right {
  display: flex;
  flex-direction: column;
  align-items: flex-end;
}

.tag {
  padding: 6px 14px 5px;
  background: #f8f6fc;
  color: #cdb6dc;
}

.tag.violet {
  color: #b9b1d8;
}

.gain {
  margin: 19px 0 18px;
  font-size: 27px;
  line-height: 34px;
  color: #a9d8ac;
}

.report {
  display: flex;
  align-items: center;
  gap: 25px;
  padding: 33px 31px 77px;
}

.report a {
  font-size: 27px;
  line-height: 38px;
  color: #7696c2;
  text-decoration: none;
}

/* composer */
.composer {
  display: flex;
  align-items: center;
  gap: 14px;
  margin-top: auto;
  padding: 22px 12px 12px 13px;
}

.field {
  display: flex;
  flex: 1;
  align-items: center;
  min-width: 0;
  height: 118px;
  padding: 0 37px 0 29px;
  border-radius: 59px;
  background: #fff;
  box-shadow: 0 2px 2px rgba(0, 0, 0, 0.18);
}

.caret {
  flex: none;
  width: 5px;
  height: 70px;
  margin: 0 -4px 0 29px;
  background: #128273;
}

input {
  flex: 1;
  min-width: 0;
  padding: 0;
  border: none;
  outline: none;
  background: none;
  font-family: inherit;
  font-size: 52px;
  line-height: 62px;
  color: #1f1f1f;
}

input::placeholder {
  color: #a8a8a8;
  opacity: 1;
}

.camera {
  margin-left: 63px;
}

.mic {
  width: 123px;
  height: 123px;
  border-radius: 50%;
  background: #00897b;
  box-shadow: 0 3px 4px rgba(0, 0, 0, 0.2);
}

/* system keys */
.keys {
  display: grid;
  grid-template-columns: repeat(3, 1fr);
  height: 126px;
  padding: 0 84px 6px 88px;
  background: #f1f1f1;
}

.keys svg {
  fill: none;
  stroke: #8b8b8b;
  stroke-width: 5;
  stroke-linecap: round;
}
</style>
